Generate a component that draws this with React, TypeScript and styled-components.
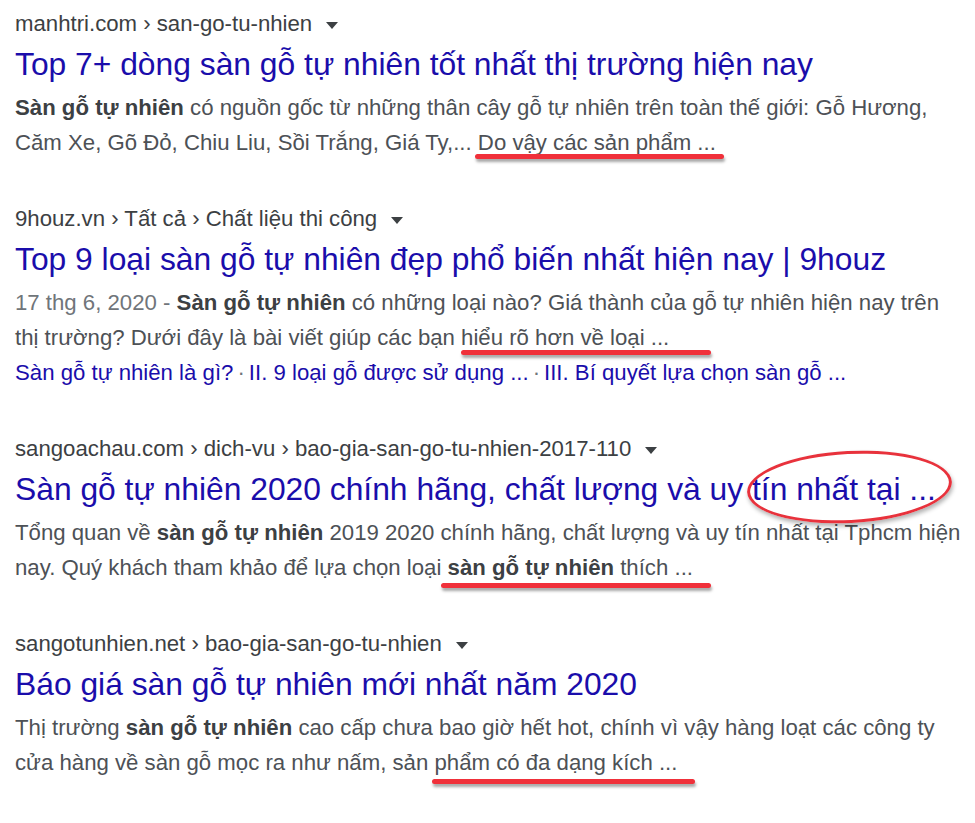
import { createGlobalStyle, styled } from "styled-components";

const Global = createGlobalStyle`
  html, body {
    margin: 0;
    padding: 0;
    background: #fff;
  }
  body {
    font-family: "Liberation Sans", Arial, sans-serif;
  }
`

const Page = styled.div`
  display: flex;
  flex-direction: column;
  gap: 44px;
  padding: 9px 0 40px 15px;
`

const Result = styled.div`
  display: flex;
  flex-direction: column;
`

const Cite = styled.div`
  display: flex;
  align-items: center;
  gap: 14px;
  font-size: 22.2px;
  line-height: 30px;
  color: #3c4043;
  white-space: nowrap;
`

const Caret = styled.span`
  width: 0;
  height: 0;
  margin-top: 2px;
  border-left: 6px solid transparent;
  border-right: 6px solid transparent;
  border-top: 7px solid #3c4043;
`

const Title = styled.a`
  margin-top: 5px;
  font-size: 31.8px;
  line-height: 40px;
  color: #1a0dab;
  text-decoration: none;
  white-space: nowrap;
`

const Snippet = styled.div`
  margin-top: 6px;
  font-size: 22.2px;
  line-height: 35px;
  color: #4d5156;
  white-space: nowrap;

  b {
    color: #3c4043;
  }
`

const Date = styled.span`
  color: #70757a;
`

const Sitelinks = styled.div`
  font-size: 22.2px;
  line-height: 35px;
  color: #1a0dab;
  white-space: nowrap;
`

const Dot = styled.span`
  color: #70757a;
  margin: 0 4px;
`

const Marked = styled.span<{ $left: number; $right: number; $drop: number }>`
  position: relative;

  &::after {
    content: "";
    position: absolute;
    left: ${(p) => -p.$left}px;
    right: ${(p) => -p.$right}px;
    bottom: ${(p) => -p.$drop}px;
    height: 5px;
    border-radius: 3px;
    background: #f0303a;
    box-shadow: 1px 3px 3px rgba(0, 0, 0, 0.35);
  }
`

const Circled = styled.span`
  position: relative;

  &::after {
    content: "";
    position: absolute;
    left: -5px;
    right: -16px;
    top: -20px;
    height: 66px;
    border: 3px solid #e8323c;
    border-radius: 50%;
    transform: rotate(-3deg);
    box-shadow: 1px 3px 4px rgba(0, 0, 0, 0.3);
  }
`

export default function App() {
  return (
    <>
      <Global />
      <Page>
        <Result>
          <Cite>
            manhtri.com › san-go-tu-nhien <Caret />
          </Cite>
          <Title href="#">Top 7+ dòng sàn gỗ tự nhiên tốt nhất thị trường hiện nay</Title>
          <Snippet>
            <b>Sàn gỗ tự nhiên</b> có nguồn gốc từ những thân cây gỗ tự nhiên trên toàn thế giới: Gỗ Hương,
            <br />
            Căm Xe, Gõ Đỏ, Chiu Liu, Sồi Trắng, Giá Ty,...{" "}
            <Marked $left={3} $right={8} $drop={4}>Do vậy các sản phẩm ...</Marked>
          </Snippet>
        </Result>

        <Result>
          <Cite>
            9houz.vn › Tất cả › Chất liệu thi công <Caret />
          </Cite>
          <Title href="#">Top 9 loại sàn gỗ tự nhiên đẹp phổ biến nhất hiện nay | 9houz</Title>
          <Snippet>
            <Date>17 thg 6, 2020 - </Date>
            <b>Sàn gỗ tự nhiên</b> có những loại nào? Giá thành của gỗ tự nhiên hiện nay trên
            <br />
            thị trường? Dưới đây là bài viết giúp các bạn{" "}
            <Marked $left={0} $right={42} $drop={5}>hiểu rõ hơn về loại ...</Marked>
          </Snippet>
          <Sitelinks>
            Sàn gỗ tự nhiên là gì?<Dot>·</Dot>II. 9 loại gỗ được sử dụng ...<Dot>·</Dot>III. Bí quyết lựa chọn sàn gỗ ...
          </Sitelinks>
        </Result>

        <Result>
          <Cite>
            sangoachau.com › dich-vu › bao-gia-san-go-tu-nhien-2017-110 <Caret />
          </Cite>
          <Title href="#">
            Sàn gỗ tự nhiên 2020 chính hãng, chất lượng và uy <Circled>tín nhất tại ...</Circled>
          </Title>
          <Snippet>
            Tổng quan về <b>sàn gỗ tự nhiên</b> 2019 2020 chính hãng, chất lượng và uy tín nhất tại Tphcm hiện
            <br />
            nay. Quý khách tham khảo để lựa chọn loại{" "}
            <Marked $left={7} $right={18} $drop={8}><b>sàn gỗ tự nhiên</b> thích ...</Marked>
          </Snippet>
        </Result>

        <Result>
          <Cite>
            sangotunhien.net › bao-gia-san-go-tu-nhien <Caret />
          </Cite>
          <Title href="#">Báo giá sàn gỗ tự nhiên mới nhất năm 2020</Title>
          <Snippet>
            Thị trường <b>sàn gỗ tự nhiên</b> cao cấp chưa bao giờ hết hot, chính vì vậy hàng loạt các công ty
            <br />
            cửa hàng về sàn gỗ mọc ra như nấm, sản{" "}
            <Marked $left={2} $right={18} $drop={9}>phẩm có đa dạng kích ...</Marked>
          </Snippet>
        </Result>
      </Page>
    </>
  )
}
